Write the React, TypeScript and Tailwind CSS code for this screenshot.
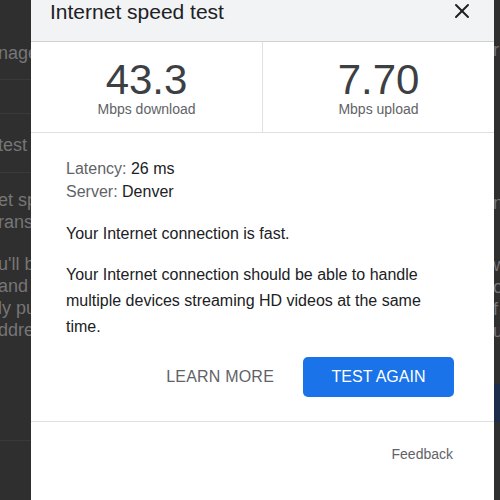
import { X } from "lucide-react";

const bgLeft = [
  { t: "nage", y: 43 },
  { t: "test", y: 135 },
  { t: "et sp", y: 190 },
  { t: "ransf", y: 212 },
  { t: "u'll b", y: 254 },
  { t: "and", y: 276 },
  { t: "ly pu", y: 298 },
  { t: "ddre", y: 320 },
];

const bgRight = [
  { t: "r", y: 40 },
  { t: "n", y: 193 },
  { t: "w", y: 255 },
  { t: "o", y: 277 },
  { t: "f", y: 299 },
  { t: "u", y: 321 },
];

export default function App() {
  return (
    <div
      className="relative w-[500px] h-[500px] overflow-hidden bg-[#2f2f2f]"
      style={{ fontFamily: "'Liberation Sans', Arial, sans-serif" }}
    >
      {/* page behind the dialog */}
      <div className="absolute inset-0">
        <div className="absolute left-0 top-[79px] w-[31px] h-px bg-[#3a3a3a]" />
        <div className="absolute left-0 top-[113px] w-[31px] h-px bg-[#3a3a3a]" />
        <div className="absolute left-0 top-[172px] w-[31px] h-px bg-[#3a3a3a]" />
        <div className="absolute left-0 top-[440px] w-[31px] h-px bg-[#3a3a3a]" />
        {bgLeft.map((l) => (
          <div
            key={l.t}
            className="absolute left-0 w-[31px] overflow-hidden whitespace-nowrap text-[18px] leading-[20px] text-[#767676]"
            style={{ top: l.y }}
          >
            <span className="-ml-[2px]">{l.t}</span>
          </div>
        ))}
        {bgRight.map((l) => (
          <div
            key={l.t}
            className="absolute left-[494px] w-[6px] overflow-hidden whitespace-nowrap text-[18px] leading-[20px] text-[#767676]"
            style={{ top: l.y }}
          >
            <span className="-ml-[1px]">{l.t}</span>
          </div>
        ))}
        <div className="absolute left-[494px] top-[384px] w-[6px] h-[38px] bg-[#1b2d4a]" />
      </div>

      {/* dialog */}
      <div className="absolute left-[31px] top-0 w-[463px] h-[520px] bg-white flex flex-col">
        <div className="h-[42px] bg-[#f1f3f4] border-b border-[#cfd1d3] flex justify-between pl-[19px] pr-[20px]">
          <div className="text-[21px] leading-[22px] text-[#202124] pt-px">Internet speed test</div>
          <X className="w-[24px] h-[24px] text-[#202124] mt-[-1px]" strokeWidth={2} />
        </div>

        <div className="flex h-[91px] border-b border-[#e0e0e0]">
          <div className="flex-1 flex flex-col items-center pt-[17px] border-r border-[#e0e0e0]">
            <div className="text-[42px] leading-[41px] text-[#3c4043]">43.3</div>
            <div className="text-[14px] leading-[16px] text-[#5f6368] mt-px">Mbps download</div>
          </div>
          <div className="flex-1 flex flex-col items-center pt-[17px]">
            <div className="text-[42px] leading-[41px] text-[#3c4043]">7.70</div>
            <div className="text-[14px] leading-[16px] text-[#5f6368] mt-px">Mbps upload</div>
          </div>
        </div>

        <div className="px-[35px] pt-[24px] text-[16px] text-[#202124]">
          <div className="leading-[23px]">
            <span className="text-[#5f6368]">Latency:</span> 26 ms
          </div>
          <div className="leading-[23px]">
            <span className="text-[#5f6368]">Server:</span> Denver
          </div>
          <p className="mt-[19px] leading-[23px]">Your Internet connection is fast.</p>
          <p className="mt-[17px] leading-[26px]">
            Your Internet connection should be able to handle multiple devices streaming HD videos at the same time.
          </p>
        </div>

        <div className="flex justify-end items-center gap-[29px] pr-[40px] mt-[17px]">
          <button className="text-[16px] text-[#5f6368] tracking-[0.2px]">LEARN MORE</button>
          <button className="w-[151px] h-[40px] rounded-[5px] bg-[#1a73e8] text-white text-[16px]">
            TEST AGAIN
          </button>
        </div>

        <div className="mt-[24px] border-t border-[#e0e0e0] flex justify-end pr-[41px] pt-[23px]">
          <span className="text-[14px] leading-[18px] text-[#5f6368]">Feedback</span>
        </div>
      </div>
    </div>
  );
}
